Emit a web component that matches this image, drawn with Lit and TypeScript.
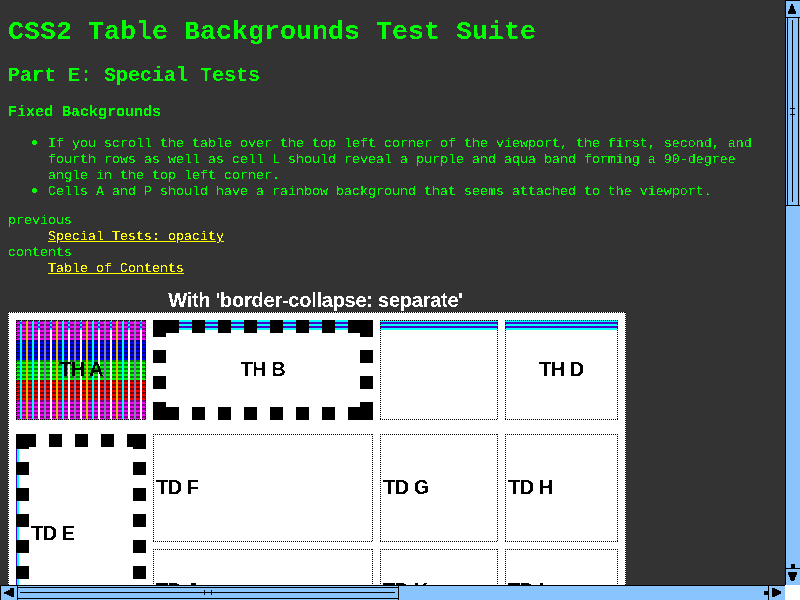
import { LitElement, html, css, svg } from "lit";
import { customElement } from "lit/decorators.js";

type Rect = [number, number, number, number];
const blocks = (list: Rect[], fill = "#000") =>
  list.map(([x, y, w, h]) => svg`<rect x=${x} y=${y} width=${w} height=${h} fill=${fill}></rect>`);

const CYAN = "#0ff", GOLD = "#dfbf00", WHITE = "#fff", GREY = "#8080b0";
const threads = [CYAN, GOLD, CYAN, WHITE, GREY, WHITE, GOLD, CYAN, WHITE, GREY, WHITE, GOLD, CYAN, WHITE, GREY, WHITE, GOLD, CYAN, WHITE, GREY, WHITE];

@customElement("app-root")
export class AppRoot extends LitElement {
  static styles = css`
    :host { display: grid; grid-template: 585px 15px / 785px 15px; width: 800px; height: 600px; overflow: hidden; background: #fff; }
    .defs { position: absolute; width: 0; height: 0; }
    .view { box-sizing: border-box; overflow: hidden; background: #333; padding: 0 8px; color: #0f0; font: 13.333px/16px "Courier New", "Liberation Mono", monospace; }
    .crisp { filter: url(#crisp); }
    h1 { font-size: 26.667px; line-height: 30px; margin: 17px 0 0; }
    h2 { font-size: 20px; line-height: 24px; margin: 17px 0 0; }
    h3 { font-size: 15px; line-height: 16px; margin: 17px 0 0; }
    ul { margin: 15px 0 0; padding-left: 40px; list-style: none; }
    li { position: relative; white-space: nowrap; }
    li::before { content: ""; position: absolute; left: -16px; top: 4px; width: 5px; height: 5px; border-radius: 2px; background: #0f0; }
    dl { margin: 13px 0 0; }
    dd { margin: 0 0 0 40px; }
    a { color: #ff0; text-decoration: underline; }
    .caption { width: 615px; margin-top: 11px; text-align: center; color: #fff; font: bold 20px/24px "Liberation Sans", sans-serif; letter-spacing: -0.25px; }
    .table { width: 618px; height: 400px; background: #fff; color: #000; box-sizing: border-box; padding: 8px 8px 0; display: grid; grid-template-columns: 130px 220px 118px 113px; grid-template-rows: 100px 108px 100px; column-gap: 7px; font: bold 20px/24px "Liberation Sans", sans-serif; letter-spacing: -0.5px; position: relative; }
    .td, .th { display: flex; align-items: center; position: relative; }
    .th { justify-content: center; }
    .r2 { margin-top: 14px; height: 108px; }
    .r3 { margin-top: 21px; height: 100px; align-items: flex-start; }
    .td span { padding-left: 3px; }
    .td svg, .th svg, .frame { position: absolute; left: 0; top: 0; }
    .td span, .th span { position: relative; padding-bottom: 2px; }
    .td.tall { grid-row: 2 / 4; margin-top: 14px; align-items: flex-start; }
    .td.tall span { padding: 87px 0 0 15px; }
    .td.r3 span { padding-top: 29px; }
    .band { background: linear-gradient(#0ff 0 2px, #40c 2px 4px, #0ff 4px 6px, #40c 6px 8px, #0ff 8px 10px, transparent 10px); }
    svg { display: block; shape-rendering: crispEdges; }
  `;

  private dots(w: number, h: number) {
    return html`<svg class="frame" width=${w} height=${h}>
      <path d="M0 .5H${w}M0 ${h - 0.5}H${w}M.5 0V${h}M${w - 0.5} 0V${h}" stroke="#000" stroke-dasharray="1 1" fill="none"></path>
    </svg>`;
  }

  private rainbow() {
    const bands = [["#f0f", "#800080"], ["#00f", "#000080"], ["#0f0", "#008000"], ["#f00", "#800000"], ["#f0f", "#800080"]];
    return html`<svg width="130" height="100">
      ${bands.map(([a, b], i) => [0, 1, 2, 3, 4].map((j) => blocks([[0, i * 20 + j * 4, 130, 2]], b)
        .concat(blocks([[0, i * 20 + j * 4 + 2, 130, 2]], a))))}
      ${threads.map((c, i) => blocks([[4 + i * 6, 0, 2, 100]], c))}
      ${blocks([[4, 2, 2, 2]], "#0060e0")}
      ${threads.map((c, i) => c === WHITE
        ? [blocks([[4 + i * 6, 0, 2, 10]], CYAN), blocks([[4 + i * 6, 2, 2, 2], [4 + i * 6, 6, 2, 2]], "#0060e0")]
        : "")}
    </svg>`;
  }

  private dashedWide() {
    const r: Rect[] = [[0, 0, 26, 13], [0, 0, 13, 17], [195, 0, 25, 13], [207, 0, 13, 17], [0, 87, 26, 13], [0, 82, 13, 18], [195, 87, 25, 13], [207, 82, 13, 18]];
    for (const x of [0, 207]) for (const y of [30, 56]) r.push([x, y, 13, 13]);
    for (let x = 39; x < 190; x += 26) r.push([x, 0, 13, 13], [x, 87, 13, 13]);
    return html`<svg width="220" height="100">${blocks(r)}</svg>`;
  }

  private dashedTall() {
    const r: Rect[] = [[0, 0, 20, 13], [0, 0, 13, 15], [111, 0, 19, 13], [117, 0, 13, 15], [33, 0, 13, 13], [59, 0, 13, 13], [85, 0, 13, 13]];
    for (const x of [0, 117]) for (let y = 28; y < 150; y += 26) r.push([x, y, 13, 13]);
    return html`<svg width="130" height="200">
      ${blocks([[0, 0, 1, 200]], "#40c")}${blocks([[1, 0, 2, 200]], "#0ff")}${blocks(r)}
    </svg>`;
  }

  render() {
    return html`
      <svg class="defs"><filter id="crisp" x="0" y="0" width="1" height="1" color-interpolation-filters="sRGB">
        <feComponentTransfer><feFuncA type="discrete" tableValues="0 1"></feFuncA></feComponentTransfer>
      </filter></svg>
      <div class="view">
        <div class="crisp">
          <h1>CSS2 Table Backgrounds Test Suite</h1>
          <h2>Part E: Special Tests</h2>
          <h3>Fixed Backgrounds</h3>
          <ul>
            <li>If you scroll the table over the top left corner of the viewport, the first, second, and<br />fourth rows as well as cell L should reveal a purple and aqua band forming a 90-degree<br />angle in the top left corner.</li>
            <li>Cells A and P should have a rainbow background that seems attached to the viewport.</li>
          </ul>
          <dl>
            <dt>previous</dt><dd><a>Special Tests: opacity</a></dd>
            <dt>contents</dt><dd><a>Table of Contents</a></dd>
          </dl>
          <div class="caption">With 'border-collapse: separate'</div>
        </div>
        <div class="table">
          ${this.dots(618, 400)}
          <div class="th">${this.rainbow()}${this.dots(130, 100)}<span class="crisp">TH A</span></div>
          <div class="th band">${this.dashedWide()}<span class="crisp">TH B</span></div>
          <div class="th band">${this.dots(118, 100)}</div>
          <div class="th band">${this.dots(113, 100)}<span class="crisp">TH D</span></div>
          <div class="td tall">${this.dashedTall()}<span class="crisp">TD E</span></div>
          <div class="td r2">${this.dots(220, 108)}<span class="crisp">TD F</span></div>
          <div class="td r2">${this.dots(118, 108)}<span class="crisp">TD G</span></div>
          <div class="td r2">${this.dots(113, 108)}<span class="crisp">TD H</span></div>
          <div class="td r3">${this.dots(220, 100)}<span class="crisp">TD J</span></div>
          <div class="td r3">${this.dots(118, 100)}<span class="crisp">TD K</span></div>
          <div class="td r3">${this.dots(113, 100)}<span class="crisp">TD L</span></div>
        </div>
      </div>
      <svg width="15" height="585">
        <rect width="15" height="585" fill="#8ac4ff"></rect>
        ${blocks([[0, 0, 1, 585], [0, 0, 15, 1], [0, 17, 15, 1], [2, 18, 1, 187], [13, 18, 1, 187], [7, 20, 1, 182], [5, 108, 5, 1], [5, 114, 5, 1], [0, 205, 15, 1], [0, 568, 15, 1], [6, 564, 4, 4]])}
        <path d="M6 4h2v2h1v3h1v2h1v3H3v-3h1V9h1V6h1z"></path>
        <path d="M3 572h9v3h-1v2h-1v3H9v1H6v-1H5v-3H4v-2H3z"></path>
      </svg>
      <svg width="785" height="15">
        <rect width="785" height="15" fill="#8ac4ff"></rect>
        ${blocks([[0, 0, 785, 1], [0, 0, 1, 15], [17, 0, 1, 15], [18, 2, 380, 1], [18, 13, 380, 1], [20, 7, 375, 1], [204, 5, 1, 5], [211, 5, 1, 5], [398, 0, 1, 15], [768, 0, 1, 15], [764, 6, 4, 4]])}
        <path d="M4 7h2V6h2V5h2V3h4v9h-3v-1H9v-1H7V9H4z"></path>
        <path d="M772 3h3v1h2v1h2v1h2v3h-2v1h-2v1h-2v1h-3z"></path>
      </svg>
    `;
  }
}
